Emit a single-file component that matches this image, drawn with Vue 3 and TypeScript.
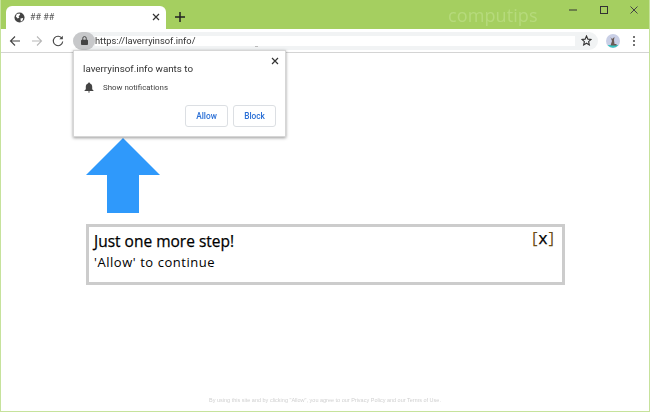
<script setup lang="ts">
const title = 'Just one more step!'
</script>

<template>
  <div class="window">
    <div class="titlebar">
      <div class="tab">
        <svg class="globe" width="11" height="11" viewBox="0 0 12 12">
          <circle cx="6" cy="6" r="5.5" fill="#444" />
          <path d="M3 2.2 6 1.5 6.8 3 5 4.5 5.8 6 4 7 2 5Z M7 7 10 6.5 9.5 9 7.5 10.5Z" fill="#fff" />
        </svg>
        <span class="tabtitle">## ##</span>
        <svg class="tabx" width="8" height="8" viewBox="0 0 8 8">
          <path d="M1 1 7 7M7 1 1 7" stroke="#333" stroke-width="1.2" />
        </svg>
      </div>
      <svg class="plus" width="10" height="10" viewBox="0 0 10 10">
        <path d="M5 0V10M0 5H10" stroke="#222" stroke-width="1.5" />
      </svg>
      <div class="brand">computips</div>
      <div class="winbtns">
        <svg width="8" height="8" viewBox="0 0 8 8"><path d="M0 4H8" stroke="#333" /></svg>
        <svg width="8" height="8" viewBox="0 0 8 8"><rect x=".5" y=".5" width="7" height="7" fill="none" stroke="#333" /></svg>
        <svg width="8" height="8" viewBox="0 0 8 8"><path d="M.5 .5 7.5 7.500M7.500 .5 .5 7.500" stroke="#444" /></svg>
      </div>
    </div>

    <div class="toolbar">
      <svg width="12" height="12" viewBox="0 0 12 12"><path d="M11 6H1.500M6 1.500 1.500 6 6 10.500" fill="none" stroke="#444" stroke-width="1.100" /></svg>
      <svg width="12" height="12" viewBox="0 0 12 12"><path d="M1 6H10.500M6 1.500 10.500 6 6 10.500" fill="none" stroke="#b8b8b8" stroke-width="1.100" /></svg>
      <svg width="12" height="12" viewBox="0 0 12 12"><path d="M10 3.500A4.700 4.700 0 1 0 10.700 6.500" fill="none" stroke="#444" stroke-width="1.100" /><path d="M10.800 .8V4.300H7.300Z" fill="#444" /></svg>
      <div class="omnibox">
        <span class="lockpill">
          <svg width="7" height="9" viewBox="0 0 8 10"><rect y="4" width="8" height="6" rx="1" fill="#444" /><path d="M2 4.500V2.500A2 2 0 0 1 6 2.500V4.500" fill="none" stroke="#444" stroke-width="1.100" /></svg>
        </span>
        <span class="url">https://laverryinsof.info/</span>
        <svg class="star" width="11" height="11" viewBox="0 0 12 12"><path d="M6 1 7.500 4.500 11 4.800 8.300 7.200 9.100 10.800 6 8.900 2.900 10.800 3.700 7.200 1 4.800 4.500 4.500Z" fill="none" stroke="#333" stroke-width="1.200" /></svg>
        <span class="speck"></span>
      </div>
      <svg class="avatar" width="14" height="14" viewBox="0 0 14 14">
        <circle cx="7" cy="7" r="7" fill="#c9cfe6" />
        <path d="M1.500 11H12.500A7 7 0 0 1 1.500 11Z" fill="#35c4c0" />
        <path d="M4.500 3 6 5 8.500 3 8 6 8.500 10H10.500V11.500H4.500L6 7Z" fill="#6a5a55" />
      </svg>
      <svg class="menu" width="4" height="12" viewBox="0 0 4 12"><circle cx="2" cy="2" r="1" fill="#444" /><circle cx="2" cy="6" r="1" fill="#444" /><circle cx="2" cy="10" r="1" fill="#444" /></svg>
    </div>

    <main class="page">
      <div class="prompt">
        <svg class="promptx" width="8" height="8" viewBox="0 0 8 8"><path d="M1 1 7 7M7 1 1 7" stroke="#333" stroke-width="1.200" /></svg>
        <div class="prompttitle">laverryinsof.info wants to</div>
        <div class="promptrow">
          <svg width="10" height="11" viewBox="0 0 10 11"><path d="M5 .5C5.600 .5 6 .9 6 1.400 7.600 1.900 8.200 3.200 8.200 4.800V7.200L9.500 8.500V9H.5V8.500L1.800 7.200V4.800C1.800 3.200 2.400 1.900 4 1.400 4 .9 4.400 .5 5 .5ZM4 9.500H6C6 10.100 5.600 10.500 5 10.500S4 10.100 4 9.500Z" fill="#444" /></svg>
          <span>Show notifications</span>
        </div>
        <div class="promptbtns">
          <button class="btn">Allow</button>
          <button class="btn">Block</button>
        </div>
      </div>

      <svg class="arrow" width="74" height="75" viewBox="0 0 74 75"><path d="M37 0 74 37H53V75H21V37H0Z" fill="#2f99fb" /></svg>

      <div class="card">
        <div class="cardtext">
          <div class="cardtitle">{{ title }}</div>
          <div class="cardsub">'Allow' to continue</div>
        </div>
        <div class="close">[<span>x</span>]</div>
      </div>

      <div class="legal">By using this site and by clicking "Allow", you agree to our Privacy Policy and our Terms of Use.</div>
    </main>
  </div>
</template>

<style>
html, body { margin: 0; padding: 0; background: #fff; }
</style>

<style scoped>
.window {
  width: 650px;
  height: 412px;
  box-sizing: border-box;
  display: flex;
  flex-direction: column;
  border: solid #c6e29c;
  border-width: 0 1px 1px 1px;
  font-family: "Open Sans", sans-serif;
  overflow: hidden;
  background: #fff;
}
.titlebar {
  height: 29px;
  flex: none;
  margin: 0 -1px;
  background: #a5cf60;
  display: flex;
  align-items: flex-start;
  padding-left: 6px;
  filter: blur(.3px);
}
.tab {
  width: 160px;
  height: 23px;
  margin-top: 6px;
  background: #fff;
  border-radius: 6px 6px 0 0;
  display: flex;
  align-items: center;
  padding: 0 6px 1px 8px;
  box-sizing: border-box;
}
.globe { flex: none; }
.tabtitle {
  margin-left: 5px;
  flex: 1;
  font: 9px "Roboto", sans-serif;
  color: #555;
}
.plus { margin: 12px 0 0 9px; flex: none; }
.brand {
  position: absolute;
  left: 448px;
  top: 3px;
  font-size: 18px;
  letter-spacing: .1px;
  color: #b6da7c;
}
.winbtns {
  margin-left: auto;
  display: flex;
  gap: 22.500px;
  padding: 6px 12px 0 0;
}
.toolbar {
  height: 23px;
  flex: none;
  background: #fff;
  border-bottom: 1px solid #d4d4d4;
  display: flex;
  align-items: center;
  gap: 9.500px;
  padding: 0 13px 0 8px;
  filter: blur(.3px);
}
.omnibox {
  flex: 1;
  height: 18px;
  margin-left: -.5px;
  background: #f1f3f4;
  border-radius: 9px;
  display: flex;
  align-items: center;
  position: relative;
}
.lockpill {
  width: 22px;
  height: 18px;
  border-radius: 9px;
  background: #c7c8ca;
  display: flex;
  align-items: center;
  justify-content: center;
  flex: none;
}
.url {
  flex: 1;
  height: 10px;
  background: #fff;
  font: 9.300px/10px "Roboto", sans-serif;
  color: #333;
}
.star { margin: 0 6px; flex: none; }
.speck {
  position: absolute;
  left: 182px;
  top: 14px;
  width: 3px;
  height: 1px;
  background: #bbb;
}
.avatar { margin-left: -1.5px; }
.menu { margin-left: 2.500px; }
.page {
  flex: 1;
  position: relative;
  display: flex;
  flex-direction: column;
}
.prompt {
  position: absolute;
  left: 72px;
  top: -3px;
  width: 213px;
  height: 87px;
  box-sizing: border-box;
  background: #fff;
  border: 1px solid #d6d6d6;
  box-shadow: 0 1px 3px rgba(0, 0, 0, .4);
  padding: 11px 9px 9px;
  filter: blur(.3px);
}
.promptx { position: absolute; right: 6px; top: 6px; }
.prompttitle {
  font: 9.800px/14px "Roboto", sans-serif;
  color: #333;
}
.promptrow {
  display: flex;
  align-items: center;
  gap: 9px;
  margin-top: 6px;
  padding-left: 1px;
  font: 7.900px/11px "Roboto", sans-serif;
  color: #444;
}
.promptbtns {
  display: flex;
  justify-content: flex-end;
  gap: 5px;
  margin-top: 12px;
}
.btn {
  width: 43px;
  height: 22px;
  box-sizing: border-box;
  padding: 0;
  background: #fff;
  border: 1px solid #dcdfe3;
  border-radius: 3px;
  font: 500 8.300px "Roboto", sans-serif;
  color: #2a6fd6;
}
.arrow { margin: 85px 0 0 85px; flex: none; }
.card {
  margin: 11px 0 0 85px;
  width: 479px;
  height: 61px;
  box-sizing: border-box;
  border: 3px solid #cccccc;
  background: #fff;
  display: flex;
  justify-content: space-between;
  padding: 2px 7px 0 5px;
  color: #000;
}
.cardtitle { font-size: 15.500px; line-height: 24px; -webkit-text-stroke: .25px #000; }
.cardsub { font-size: 13px; line-height: 20px; letter-spacing: .55px; margin-top: -1px; }
.close { font-size: 17px; line-height: 20px; color: #6b4d14; letter-spacing: 1px; margin-top: -1px; }
.close span { color: #000; -webkit-text-stroke: .25px #000; }
.legal {
  margin-top: auto;
  padding-bottom: 8px;
  text-align: center;
  font: 5.500px "Liberation Sans", sans-serif;
  color: #d0d0d0;
  filter: blur(.3px);
}
</style>
